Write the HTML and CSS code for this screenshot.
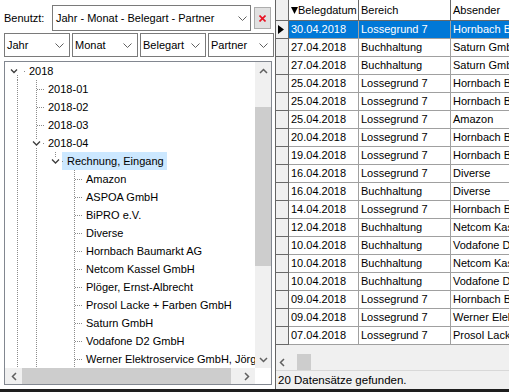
FILE: index.html
```html
<!DOCTYPE html>
<html lang="de">
<head>
  <meta charset="UTF-8">
  <meta name="viewport" content="width=device-width, initial-scale=1.0">
  <title>Belege</title>
  <link rel="stylesheet" href="styles.css">
</head>
<body>
  <div class="window">
    <!-- Left side: grouping and tree -->
    <div class="filter-panel">
      <div class="user-row">
        <span class="user-label">Benutzt:</span>
        <div class="combo combo-main">
          <span>Jahr - Monat - Belegart - Partner</span>
          <svg class="drop" width="9" height="5" viewBox="0 0 9 5"><path d="M.5.5l4 4 4-4"/></svg>
        </div>
        <button class="clear-btn" type="button">
          <svg width="7" height="7" viewBox="0 0 7 7"><path d="M.5.5l6 6M6.5.5l-6 6"/></svg>
        </button>
      </div>

      <div class="level-row">
        <div class="combo combo-level"><span>Jahr</span><svg class="drop" width="9" height="5" viewBox="0 0 9 5"><path d="M.5.5l4 4 4-4"/></svg></div>
        <div class="combo combo-level"><span>Monat</span><svg class="drop" width="9" height="5" viewBox="0 0 9 5"><path d="M.5.5l4 4 4-4"/></svg></div>
        <div class="combo combo-level"><span>Belegart</span><svg class="drop" width="9" height="5" viewBox="0 0 9 5"><path d="M.5.5l4 4 4-4"/></svg></div>
        <div class="combo combo-level"><span>Partner</span><svg class="drop" width="9" height="5" viewBox="0 0 9 5"><path d="M.5.5l4 4 4-4"/></svg></div>
      </div>

      <div class="tree">
        <div class="tree-body">
          <div class="tree-canvas">
            <div class="node">
              <span class="cell root"><svg width="19" height="18" viewBox="0 0 19 18"><rect x="4" y="5" width="10" height="8" fill="#fff"/><path class="chev" d="M6 7.5l3 3 3-3"/></svg></span>
              <span class="label">2018</span>
            </div>
            <div class="node"><span class="cell pass"></span><span class="cell tee"></span><span class="label">2018-01</span></div>
            <div class="node"><span class="cell pass"></span><span class="cell tee"></span><span class="label">2018-02</span></div>
            <div class="node"><span class="cell pass"></span><span class="cell tee"></span><span class="label">2018-03</span></div>
            <div class="node">
              <span class="cell pass"></span>
              <span class="cell tee"><svg width="19" height="18" viewBox="0 0 19 18"><rect x="8" y="5" width="10" height="8" fill="#fff"/><path class="chev" d="M9 7.5l3.5 3.5 3.5-3.5"/></svg></span>
              <span class="label">2018-04</span>
            </div>
            <div class="node">
              <span class="cell pass"></span><span class="cell pass"></span>
              <span class="cell elbow"><svg width="19" height="18" viewBox="0 0 19 18"><rect x="8" y="5" width="10" height="8" fill="#fff"/><path class="chev" d="M9 7.5l3.5 3.5 3.5-3.5"/></svg></span>
              <span class="label selected">Rechnung, Eingang</span>
            </div>
            <div class="node"><span class="cell pass"></span><span class="cell pass"></span><span class="cell"></span><span class="cell tee"></span><span class="label">Amazon</span></div>
            <div class="node"><span class="cell pass"></span><span class="cell pass"></span><span class="cell"></span><span class="cell tee"></span><span class="label">ASPOA GmbH</span></div>
            <div class="node"><span class="cell pass"></span><span class="cell pass"></span><span class="cell"></span><span class="cell tee"></span><span class="label">BiPRO e.V.</span></div>
            <div class="node"><span class="cell pass"></span><span class="cell pass"></span><span class="cell"></span><span class="cell tee"></span><span class="label">Diverse</span></div>
            <div class="node"><span class="cell pass"></span><span class="cell pass"></span><span class="cell"></span><span class="cell tee"></span><span class="label">Hornbach Baumarkt AG</span></div>
            <div class="node"><span class="cell pass"></span><span class="cell pass"></span><span class="cell"></span><span class="cell tee"></span><span class="label">Netcom Kassel GmbH</span></div>
            <div class="node"><span class="cell pass"></span><span class="cell pass"></span><span class="cell"></span><span class="cell tee"></span><span class="label">Plöger, Ernst-Albrecht</span></div>
            <div class="node"><span class="cell pass"></span><span class="cell pass"></span><span class="cell"></span><span class="cell tee"></span><span class="label">Prosol Lacke + Farben GmbH</span></div>
            <div class="node"><span class="cell pass"></span><span class="cell pass"></span><span class="cell"></span><span class="cell tee"></span><span class="label">Saturn GmbH</span></div>
            <div class="node"><span class="cell pass"></span><span class="cell pass"></span><span class="cell"></span><span class="cell tee"></span><span class="label">Vodafone D2 GmbH</span></div>
            <div class="node"><span class="cell pass"></span><span class="cell pass"></span><span class="cell"></span><span class="cell tee"></span><span class="label">Werner Elektroservice GmbH, Jörg Werner</span></div>
          </div>
          <div class="vscroll">
            <div class="sb-btn"><svg width="9" height="6" viewBox="0 0 9 6"><path d="M1 5l3.5-3.5L8 5"/></svg></div>
            <div class="vthumb"></div>
            <div class="sb-fill"></div>
            <div class="sb-btn"><svg width="9" height="6" viewBox="0 0 9 6"><path d="M1 1l3.5 3.5L8 1"/></svg></div>
          </div>
        </div>
        <div class="tree-foot">
          <div class="hscroll">
            <div class="sb-btn"><svg width="6" height="9" viewBox="0 0 6 9"><path d="M5 1L1.5 4.5 5 8"/></svg></div>
            <div class="hthumb"></div>
            <div class="sb-fill"></div>
            <div class="sb-btn"><svg width="6" height="9" viewBox="0 0 6 9"><path d="M1 1l3.5 3.5L1 8"/></svg></div>
          </div>
          <div class="corner"></div>
        </div>
      </div>
    </div>

    <!-- Right side: document grid -->
    <div class="grid-panel">
      <div class="grid-area">
        <div class="grid-row grid-head">
          <div class="rh"></div>
          <div class="gc col-date"><svg class="sort" width="7" height="7" viewBox="0 0 7 7"><path d="M0 0h7L3.5 7z"/></svg>Belegdatum</div>
          <div class="gc col-area">Bereich</div>
          <div class="gc col-from">Absender</div>
        </div>
        <div class="grid-row current">
          <div class="rh"><svg width="12" height="17" viewBox="0 0 12 17"><path d="M2 4l6 4.5L2 13z"/></svg></div>
          <div class="gc col-date">30.04.2018</div><div class="gc col-area">Lossegrund 7</div><div class="gc col-from">Hornbach Baumarkt AG</div>
        </div>
        <div class="grid-row"><div class="rh"></div><div class="gc col-date">27.04.2018</div><div class="gc col-area">Buchhaltung</div><div class="gc col-from">Saturn GmbH</div></div>
        <div class="grid-row"><div class="rh"></div><div class="gc col-date">27.04.2018</div><div class="gc col-area">Buchhaltung</div><div class="gc col-from">Saturn GmbH</div></div>
        <div class="grid-row"><div class="rh"></div><div class="gc col-date">25.04.2018</div><div class="gc col-area">Lossegrund 7</div><div class="gc col-from">Hornbach Baumarkt AG</div></div>
        <div class="grid-row"><div class="rh"></div><div class="gc col-date">25.04.2018</div><div class="gc col-area">Lossegrund 7</div><div class="gc col-from">Hornbach Baumarkt AG</div></div>
        <div class="grid-row"><div class="rh"></div><div class="gc col-date">25.04.2018</div><div class="gc col-area">Lossegrund 7</div><div class="gc col-from">Amazon</div></div>
        <div class="grid-row"><div class="rh"></div><div class="gc col-date">20.04.2018</div><div class="gc col-area">Lossegrund 7</div><div class="gc col-from">Hornbach Baumarkt AG</div></div>
        <div class="grid-row"><div class="rh"></div><div class="gc col-date">19.04.2018</div><div class="gc col-area">Lossegrund 7</div><div class="gc col-from">Hornbach Baumarkt AG</div></div>
        <div class="grid-row"><div class="rh"></div><div class="gc col-date">16.04.2018</div><div class="gc col-area">Lossegrund 7</div><div class="gc col-from">Diverse</div></div>
        <div class="grid-row"><div class="rh"></div><div class="gc col-date">16.04.2018</div><div class="gc col-area">Buchhaltung</div><div class="gc col-from">Diverse</div></div>
        <div class="grid-row"><div class="rh"></div><div class="gc col-date">14.04.2018</div><div class="gc col-area">Lossegrund 7</div><div class="gc col-from">Hornbach Baumarkt AG</div></div>
        <div class="grid-row"><div class="rh"></div><div class="gc col-date">12.04.2018</div><div class="gc col-area">Buchhaltung</div><div class="gc col-from">Netcom Kassel GmbH</div></div>
        <div class="grid-row"><div class="rh"></div><div class="gc col-date">10.04.2018</div><div class="gc col-area">Buchhaltung</div><div class="gc col-from">Vodafone D2 GmbH</div></div>
        <div class="grid-row"><div class="rh"></div><div class="gc col-date">10.04.2018</div><div class="gc col-area">Buchhaltung</div><div class="gc col-from">Netcom Kassel GmbH</div></div>
        <div class="grid-row"><div class="rh"></div><div class="gc col-date">10.04.2018</div><div class="gc col-area">Buchhaltung</div><div class="gc col-from">Vodafone D2 GmbH</div></div>
        <div class="grid-row"><div class="rh"></div><div class="gc col-date">09.04.2018</div><div class="gc col-area">Lossegrund 7</div><div class="gc col-from">Hornbach Baumarkt AG</div></div>
        <div class="grid-row"><div class="rh"></div><div class="gc col-date">09.04.2018</div><div class="gc col-area">Lossegrund 7</div><div class="gc col-from">Werner Elektroservice GmbH</div></div>
        <div class="grid-row"><div class="rh"></div><div class="gc col-date">07.04.2018</div><div class="gc col-area">Lossegrund 7</div><div class="gc col-from">Prosol Lacke + Farben GmbH</div></div>
      </div>
      <div class="grid-hscroll">
        <div class="sb-btn grid-left"><svg width="6" height="9" viewBox="0 0 6 9"><path d="M5 1L1.5 4.5 5 8"/></svg></div>
        <div class="grid-thumb"></div>
      </div>
      <div class="status">20 Datensätze gefunden.</div>
    </div>
  </div>
  <div class="taskbar"></div>
</body>
</html>
```

FILE: styles.css
```css
* {
  box-sizing: border-box;
}
:root {
  --vdots: repeating-linear-gradient(to bottom, #8c8c8c 0 1px, transparent 1px 2px);
  --hdots: repeating-linear-gradient(to right, #8c8c8c 0 1px, transparent 1px 2px);
}
body {
  margin: 0;
  width: 509px;
  height: 392px;
  overflow: hidden;
  background-color: #fff;
  font-family: "Liberation Sans", Arial, sans-serif;
  font-size: 11px;
  color: #000;
}
.window {
  display: flex;
  height: 389px;
}
.taskbar {
  height: 3px;
  background-color: #1e1e1e;
}

/* left panel */
.filter-panel {
  width: 275px;
  flex: none;
  overflow: hidden;
  padding-left: 4px;
}
.user-row {
  display: flex;
  align-items: center;
  margin-top: 5px;
  height: 26px;
}
.user-label {
  width: 48px;
  flex: none;
}
.combo {
  display: flex;
  align-items: center;
  justify-content: space-between;
  flex: none;
  border: 1px solid #7a7a7a;
  background-color: #fff;
  white-space: nowrap;
}
.combo-main {
  width: 199px;
  height: 26px;
  padding: 0 3px 0 3px;
}
.combo-level {
  width: 66px;
  height: 24px;
  padding: 0 5px 0 2px;
}
.drop path {
  fill: none;
  stroke: #606060;
  stroke-width: 1;
}
.clear-btn {
  width: 17px;
  height: 22px;
  margin-left: 3px;
  padding: 0;
  flex: none;
  display: flex;
  align-items: center;
  justify-content: center;
  background-color: #e1e1e1;
  border: 1px solid #adadad;
}
.clear-btn path {
  stroke: #e81123;
  stroke-width: 1.6;
}
.level-row {
  display: flex;
  gap: 2px;
  margin-top: 2px;
}

/* tree */
.tree {
  width: 268px;
  height: 324px;
  margin-top: 4px;
  border: 1px solid #828790;
  display: flex;
  flex-direction: column;
}
.tree-body {
  display: flex;
  height: 306px;
}
.tree-canvas {
  flex: 1;
  min-width: 0;
  overflow: hidden;
}
.node {
  display: flex;
  height: 18px;
  line-height: 18px;
  white-space: nowrap;
}
.cell {
  flex: none;
  width: 19px;
  height: 18px;
  background-repeat: no-repeat;
}
.cell svg {
  display: block;
}
.chev {
  fill: none;
  stroke: #3c3c3c;
  stroke-width: 1.3;
}
.pass {
  background-image: var(--vdots);
  background-size: 1px 18px;
  background-position: 12px 0;
}
.tee {
  background-image: var(--vdots), var(--hdots);
  background-size: 1px 18px, 7px 1px;
  background-position: 12px 0, 13px 9px;
}
.elbow {
  background-image: var(--vdots), var(--hdots);
  background-size: 1px 9px, 7px 1px;
  background-position: 12px 0, 13px 9px;
}
.root {
  background-image: var(--vdots);
  background-size: 1px 9px;
  background-position: 12px 9px;
}
.label {
  padding-left: 5px;
  background: var(--hdots) 0 9px / 2px 1px no-repeat;
}
.label.selected {
  background-color: #cce8ff;
  padding-right: 3px;
}

/* scroll bars */
.vscroll {
  width: 16px;
  flex: none;
  display: flex;
  flex-direction: column;
  background-color: #f0f0f0;
}
.sb-btn {
  flex: none;
  display: flex;
  align-items: center;
  justify-content: center;
}
.vscroll .sb-btn {
  height: 17px;
}
.sb-btn path {
  fill: none;
  stroke: #606060;
  stroke-width: 1.5;
}
.vthumb {
  height: 159px;
  margin-top: 28px;
  background-color: #cdcdcd;
}
.sb-fill {
  flex: 1;
}
.tree-foot {
  display: flex;
  height: 16px;
}
.hscroll {
  flex: 1;
  display: flex;
  background-color: #f0f0f0;
}
.hscroll .sb-btn {
  width: 17px;
}
.hthumb {
  width: 209px;
  background-color: #cdcdcd;
}
.corner {
  width: 16px;
  flex: none;
  background-color: #fff;
}

/* grid */
.grid-panel {
  flex: 1;
  min-width: 0;
  border-left: 1px solid #646464;
  display: flex;
  flex-direction: column;
  overflow: hidden;
}
.grid-area {
  height: 354px;
  background-color: #f0f0f0;
  overflow: hidden;
}
.grid-row {
  display: flex;
  height: 18px;
  line-height: 17px;
  white-space: nowrap;
}
.grid-head {
  height: 21px;
  line-height: 20px;
}
.rh {
  width: 13px;
  flex: none;
  background-color: #f0f0f0;
  border-right: 1px solid #696969;
  border-bottom: 1px solid #696969;
}
.rh svg {
  display: block;
}
.rh path {
  fill: #000;
}
.gc {
  flex: none;
  padding-left: 2px;
  overflow: hidden;
  background-color: #fff;
  border-right: 1px solid #a0a0a0;
  border-bottom: 1px solid #a0a0a0;
}
.grid-head .gc {
  display: flex;
  align-items: center;
  border-color: #696969;
}
.col-date {
  width: 70px;
}
.col-area {
  width: 92px;
}
.col-from {
  width: 130px;
}
.grid-row.current .gc {
  background-color: #0078d7;
  color: #fff;
}
.grid-hscroll {
  height: 16px;
  display: flex;
  background-color: #f0f0f0;
}
.grid-left {
  width: 12px;
}
.grid-thumb {
  width: 14px;
  margin-left: 9px;
  background-color: #cdcdcd;
}
.status {
  height: 19px;
  border-top: 1px solid #d8d8d8;
  background-color: #f0f0f0;
  padding-left: 2px;
  line-height: 18px;
  font-size: 11.5px;
}
```
